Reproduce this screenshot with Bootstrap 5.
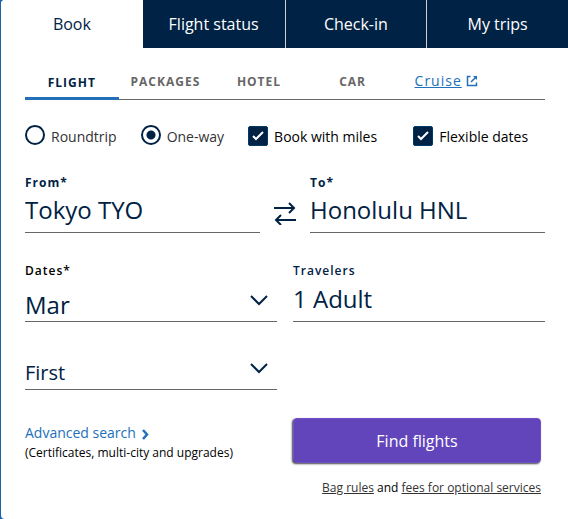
<!DOCTYPE html>
<html lang="en">
<head>
<meta charset="utf-8">
<meta name="viewport" content="width=device-width, initial-scale=1">
<title>Book a flight</title>
<link href="https://cdn.jsdelivr.net/npm/bootstrap@5.3.0/dist/css/bootstrap.min.css" rel="stylesheet">
<style>
:root { --navy: #002244; --blue: #2270b9; --rule: #666; }
body { font-family: "Open Sans", "Noto Sans", sans-serif; font-size: 14px; line-height: 20px; color: #000; background: #1a62aa; }
.booking { min-height: 100vh; margin-left: 1px; background: #fff; border-radius: 4px 0 0 4px; overflow: hidden; }
.main-tabs .nav-link { height: 48px; padding: 0; font-size: 16px; line-height: 48px; color: #fff; background: var(--navy); border: 0; border-radius: 0; }
.main-tabs .nav-item + .nav-item + .nav-item .nav-link { border-left: 1px solid #d0d0ce; }
.main-tabs .nav-link.active { color: var(--navy); background: #fff; }
.panel { padding: 16px 23px 16px 24px; }
.sub-tabs { height: 36px; border-bottom: 1px solid var(--rule); }
.sub-tabs .nav-item { width: 18%; }
.sub-tabs .nav-link { width: 100%; height: 36px; padding: 0; font-size: 12px; font-weight: 700; line-height: 34px; letter-spacing: 1px; color: var(--rule); white-space: nowrap; background: none; border: 0; border-radius: 0; }
.sub-tabs .nav-link.active { padding-top: 2px; color: var(--navy); border-bottom: 3px solid var(--blue); }
.sub-tabs a.nav-link { height: 34px; font-size: 14px; font-weight: 400; color: var(--blue); }
.options { margin-top: 25px; height: 24px; gap: 24px; }
.options label { padding: 2px 0 0 6px; color: #000; }
.options .form-check-input { width: 20px; height: 20px; margin: 0; border: 2px solid var(--navy); flex: none; }
.options .form-check-input[type=radio] + label { color: #333; }
.options .form-check-input[type=radio]:checked { background-color: #fff; background-image: radial-gradient(circle, var(--navy) 4px, transparent 5px); }
.options .form-check-input[type=checkbox] { border: 1px solid #003a66; border-radius: 2px; margin-top: 1px; }
.options .form-check-input[type=checkbox]:checked { background: var(--navy) url("data:image/svg+xml,%3Csvg xmlns='http://www.w3.org/2000/svg' viewBox='0 0 18 18' fill='none' stroke='white' stroke-width='2'%3E%3Cpath d='M4 9l3 3 7-7'/%3E%3C/svg%3E") no-repeat center / 18px; }
.route { display: grid; grid-template-columns: 1fr 50px 1fr; margin-top: 25px; }
.pair { display: grid; grid-template-columns: 1fr 1fr; column-gap: 16px; }
.choices { margin-top: 29px; }
.cabin { margin-top: 26px; }
.field-label { display: block; height: 18px; font-size: 12px; font-weight: 700; line-height: 18px; letter-spacing: 1px; color: var(--navy); }
.field-label.semi { font-weight: 600; }
.field-label.dark { color: #000; }
.line-field { display: block; width: 100%; height: 41px; padding: 0 0 6px; font-size: 24px; line-height: 32px; color: var(--navy); background: transparent; border: 0; border-bottom: 1px solid var(--rule); border-radius: 0; appearance: none; }
.pair .line-field { height: 42px; padding-bottom: 4px; }
.pair select.line-field { padding: 9px 0 0; line-height: 28px; background: url("data:image/svg+xml,%3Csvg xmlns='http://www.w3.org/2000/svg' viewBox='0 0 18 12' fill='none' stroke='%23002244' stroke-width='2'%3E%3Cpath d='M1 1l8 8 8-8'/%3E%3C/svg%3E") no-repeat right 9px center / 18px 12px; }
.swap { padding: 0; margin-top: 25px; height: 28px; line-height: 0; border: 0; }
.find { width: 100%; height: 45px; padding: 0; font-size: 16px; color: #fff; background: #6244bb; border: 1px solid #704fc8; border-radius: 4px; box-shadow: -1px 1px 2px #444; }
.find:hover { color: #fff; background: #5638ad; }
.blue-link { color: var(--blue); }
.more { padding-top: 5px; }
.note { font-size: 12px; line-height: 18px; }
.more .note { line-height: 20px; }
.note a { color: #333; }
</style>
</head>
<body>
<main class="booking">
  <ul class="nav nav-justified main-tabs">
    <li class="nav-item"><button class="nav-link active" type="button">Book</button></li>
    <li class="nav-item"><button class="nav-link" type="button">Flight status</button></li>
    <li class="nav-item"><button class="nav-link" type="button">Check-in</button></li>
    <li class="nav-item"><button class="nav-link" type="button">My trips</button></li>
  </ul>
  <form class="panel">
    <ul class="nav flex-nowrap sub-tabs">
      <li class="nav-item"><button class="nav-link active" type="button">FLIGHT</button></li>
      <li class="nav-item"><button class="nav-link" type="button">PACKAGES</button></li>
      <li class="nav-item"><button class="nav-link" type="button">HOTEL</button></li>
      <li class="nav-item"><button class="nav-link" type="button">CAR</button></li>
      <li class="nav-item"><a class="nav-link d-flex justify-content-center align-items-center gap-1" href="#"><span class="text-decoration-underline">Cruise</span>
        <svg width="12" height="12" viewBox="0 0 12 12" fill="none" stroke="currentColor" stroke-width="1.5" aria-hidden="true"><path d="M4.500 1.500H1.500v9h9v-3M5 7l5-5"/><path d="M7 1h4v4z" fill="currentColor" stroke="none"/></svg></a></li>
    </ul>

    <div class="options d-flex align-items-start">
      <div class="d-flex"><input class="form-check-input" type="radio" name="trip" id="round"><label for="round">Roundtrip</label></div>
      <div class="d-flex"><input class="form-check-input" type="radio" name="trip" id="oneway" checked><label for="oneway">One-way</label></div>
      <div class="d-flex"><input class="form-check-input" type="checkbox" id="miles" checked><label for="miles">Book with miles</label></div>
      <div class="d-flex ms-2 ps-1"><input class="form-check-input" type="checkbox" id="flex" checked><label for="flex">Flexible dates</label></div>
    </div>

    <div class="route">
      <div>
        <label class="field-label" for="from">From*</label>
        <input class="line-field" id="from" type="text" value="Tokyo TYO">
      </div>
      <button class="btn swap" type="button" aria-label="Swap airports">
        <svg width="22" height="24" viewBox="0 0 22 24" fill="none" stroke="#002244" stroke-width="2" aria-hidden="true"><path d="M0 7h20M15 2l5 5-5 5M22 19H2M7 14l-5 5 5 5"/></svg>
      </button>
      <div>
        <label class="field-label" for="to">To*</label>
        <input class="line-field" id="to" type="text" value="Honolulu HNL">
      </div>
    </div>

    <div class="pair choices">
      <div>
        <label class="field-label semi dark" for="dates">Dates*</label>
        <select class="line-field" id="dates"><option>Mar</option></select>
      </div>
      <div>
        <label class="field-label semi" for="travelers">Travelers</label>
        <input class="line-field" id="travelers" type="text" value="1 Adult">
      </div>
    </div>
    <div class="pair cabin">
      <select class="line-field fs-5" aria-label="Cabin"><option>First</option></select>
    </div>

    <div class="pair mt-4 pt-1">
      <div class="more">
        <a class="blue-link text-decoration-none" href="#">Advanced search<svg class="ms-1" width="10" height="11" viewBox="0 0 10 11" fill="none" stroke="currentColor" stroke-width="2.5" aria-hidden="true"><path d="M3 1l4 4.500-4 4.500"/></svg></a>
        <div class="note">(Certificates, multi-city and upgrades)</div>
      </div>
      <div class="pe-1">
        <button class="btn find" type="submit">Find flights</button>
        <div class="note text-end mt-3"><a href="#">Bag rules</a> and <a href="#">fees for optional services</a></div>
      </div>
    </div>
  </form>
</main>
<script src="https://cdn.jsdelivr.net/npm/bootstrap@5.3.0/dist/js/bootstrap.bundle.min.js"></script>
</body>
</html>
